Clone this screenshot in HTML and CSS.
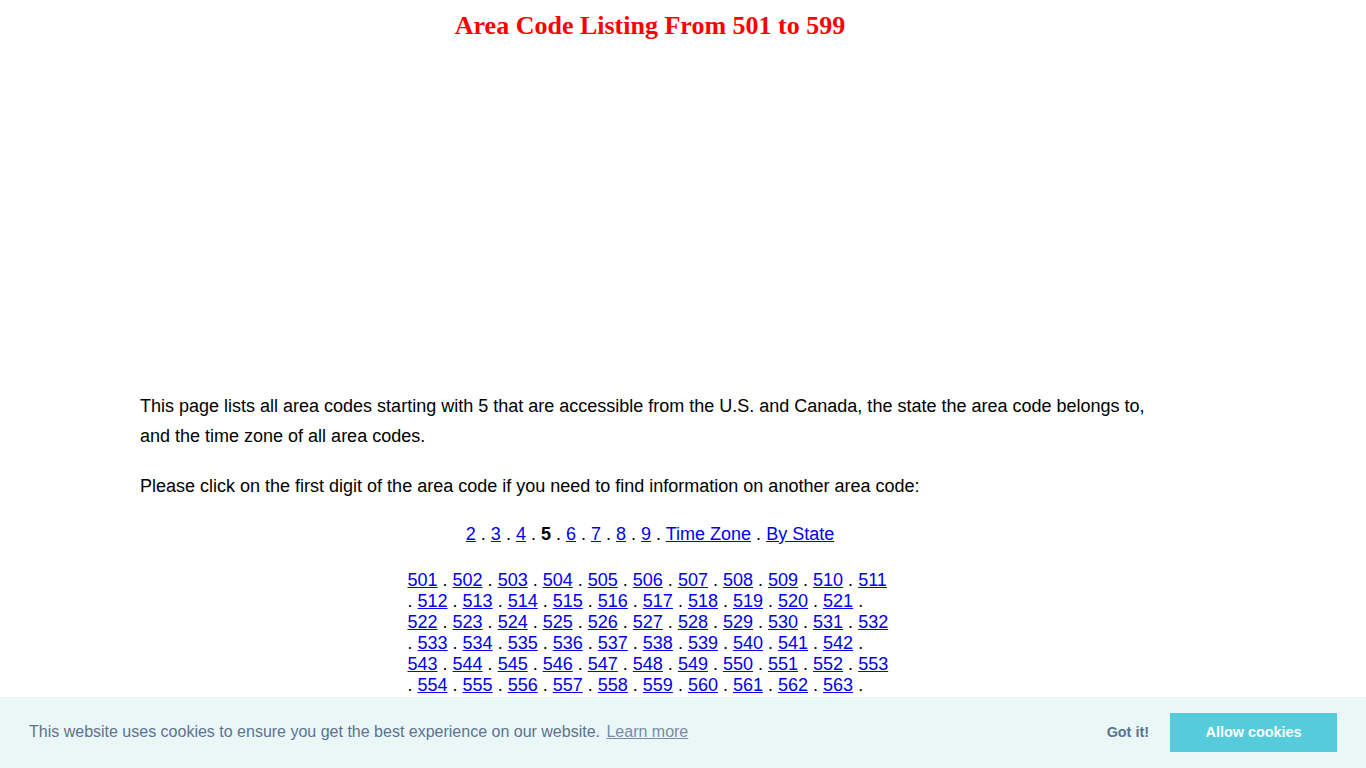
FILE: index.html
```html
<!DOCTYPE html>
<html>
<head>
<meta charset="utf-8">
<title>Area Code Listing From 501 to 599</title>
<link rel="stylesheet" href="styles.css">
</head>
<body>
<div class="page">
  <h1 class="title">Area Code Listing From 501 to 599</h1>
  <div class="ad"></div>
  <p class="text intro">This page lists all area codes starting with 5 that are accessible from the U.S. and Canada, the state the area code belongs to, and the time zone of all area codes.</p>
  <p class="text">Please click on the first digit of the area code if you need to find information on another area code:</p>
  <p class="nav"><a href="#">2</a> . <a href="#">3</a> . <a href="#">4</a> . <b>5</b> . <a href="#">6</a> . <a href="#">7</a> . <a href="#">8</a> . <a href="#">9</a> . <a href="#">Time Zone</a> . <a href="#">By State</a></p>
  <div class="codes" id="codes"><a href="#">501</a> . <a href="#">502</a> . <a href="#">503</a> . <a href="#">504</a> . <a href="#">505</a> . <a href="#">506</a> . <a href="#">507</a> . <a href="#">508</a> . <a href="#">509</a> . <a href="#">510</a> . <a href="#">511</a> . <a href="#">512</a> . <a href="#">513</a> . <a href="#">514</a> . <a href="#">515</a> . <a href="#">516</a> . <a href="#">517</a> . <a href="#">518</a> . <a href="#">519</a> . <a href="#">520</a> . <a href="#">521</a> . <a href="#">522</a> . <a href="#">523</a> . <a href="#">524</a> . <a href="#">525</a> . <a href="#">526</a> . <a href="#">527</a> . <a href="#">528</a> . <a href="#">529</a> . <a href="#">530</a> . <a href="#">531</a> . <a href="#">532</a> . <a href="#">533</a> . <a href="#">534</a> . <a href="#">535</a> . <a href="#">536</a> . <a href="#">537</a> . <a href="#">538</a> . <a href="#">539</a> . <a href="#">540</a> . <a href="#">541</a> . <a href="#">542</a> . <a href="#">543</a> . <a href="#">544</a> . <a href="#">545</a> . <a href="#">546</a> . <a href="#">547</a> . <a href="#">548</a> . <a href="#">549</a> . <a href="#">550</a> . <a href="#">551</a> . <a href="#">552</a> . <a href="#">553</a> . <a href="#">554</a> . <a href="#">555</a> . <a href="#">556</a> . <a href="#">557</a> . <a href="#">558</a> . <a href="#">559</a> . <a href="#">560</a> . <a href="#">561</a> . <a href="#">562</a> . <a href="#">563</a> . <a href="#">564</a> . <a href="#">565</a> . <a href="#">566</a> . <a href="#">567</a> . <a href="#">568</a> . <a href="#">569</a> . <a href="#">570</a> . <a href="#">571</a> . <a href="#">572</a> . <a href="#">573</a> . <a href="#">574</a> . <a href="#">575</a></div>
</div>
<div class="cookie">
  <span class="cookie-msg">This website uses cookies to ensure you get the best experience on our website. <a class="cookie-link" href="#">Learn more</a></span>
  <div class="cookie-actions">
    <a class="btn-deny" href="#">Got it!</a>
    <a class="btn-allow" href="#">Allow cookies</a>
  </div>
</div>
</body>
</html>
```
FILE: styles.css
```css
html, body {
  margin: 0;
  padding: 0;
  background: #ffffff;
}
body {
  font-family: "Liberation Sans", Arial, sans-serif;
  color: #000000;
}
.page {
  width: 1020px;
  margin-left: 140px;
}
.title {
  margin: 0;
  padding-top: 10px;
  font-family: "Liberation Serif", "Times New Roman", serif;
  font-weight: bold;
  font-size: 26px;
  line-height: 32px;
  color: #ff0000;
  text-align: center;
}
.ad {
  height: 349px;
}
.text {
  margin: 0 0 18px 0;
  font-size: 18px;
  line-height: 30px;
}
.intro {
  margin-bottom: 20px;
}
.nav {
  margin: 0 0 21px 0;
  font-size: 18px;
  line-height: 30px;
  text-align: center;
}
a {
  color: #0000ee;
}
.codes {
  width: 485px;
  margin: 0 auto;
  font-size: 18px;
  line-height: 21px;
  padding-bottom: 100px;
}
.cookie {
  position: fixed;
  left: 0;
  right: 0;
  bottom: 0;
  height: 71px;
  box-sizing: border-box;
  padding: 16px 29px 17px 29px;
  background: #eaf7f7;
  color: #5c7291;
  font-family: "Liberation Sans", Helvetica, Arial, sans-serif;
  font-size: 16px;
  display: flex;
  align-items: center;
  justify-content: space-between;
}
.cookie-link {
  color: #5c7291;
  opacity: 0.8;
  margin-left: 2px;
}
.cookie-actions {
  display: flex;
  align-items: center;
}
.btn-deny {
  color: #5c7291;
  font-weight: bold;
  font-size: 14.4px;
  text-decoration: none;
  padding: 6px 21px 6px 12px;
}
.btn-allow {
  display: flex;
  align-items: center;
  justify-content: center;
  width: 167px;
  height: 39px;
  background: #56cbdb;
  color: #ffffff;
  font-weight: bold;
  font-size: 14.4px;
  text-decoration: none;
}
```
